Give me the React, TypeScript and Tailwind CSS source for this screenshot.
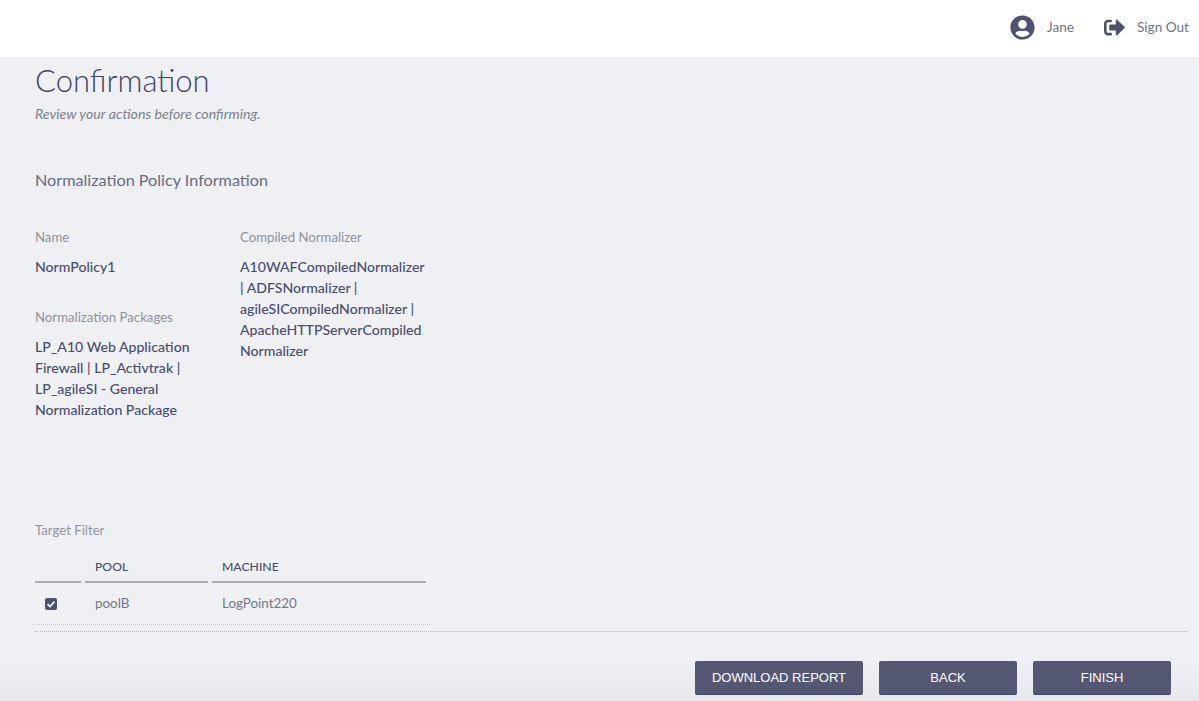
import { FaSignOutAlt, FaUserCircle } from "react-icons/fa";

function Label({ children }: { children: React.ReactNode }) {
  return <div className="text-[13.2px] leading-[20px] text-[#8f929e]">{children}</div>;
}

function Value({ children }: { children: React.ReactNode }) {
  return <div className="mt-[9px] text-[14.1px] font-medium leading-[21px] text-[#484d6e]">{children}</div>;
}

function ActionButton({ label, width }: { label: string; width: string }) {
  return (
    <button className={"h-[34px] rounded-[2px] border-b border-dotted border-[#2f3350] bg-[#535773] text-[13px] text-white font-['Liberation_Sans',sans-serif] " + width}>
      {label}
    </button>
  );
}

export default function App() {
  return (
    <div className="h-[701px] overflow-hidden bg-[linear-gradient(to_bottom,#eff0f4_94%,#e7e8eb_100%)] font-['Lato',sans-serif]">
      <header className="flex h-[57px] items-center justify-end bg-white pb-[3px] pr-[10px] text-[13.6px] text-[#6f7285]">
        <FaUserCircle className="text-[25px] text-[#4e5272]" />
        <span className="ml-[12px]">Jane</span>
        <FaSignOutAlt className="ml-[30px] text-[21px] text-[#4e5272]" />
        <span className="ml-[12px]">Sign Out</span>
      </header>

      <main className="pl-[35px] pr-[12px]">
        <h1 className="mt-[4px] text-[31px] font-light leading-[38px] text-[#3f4463]">Confirmation</h1>
        <p className="mt-[5px] text-[14.2px] italic leading-[20px] text-[#7d808c]">Review your actions before confirming.</p>
        <h2 className="mt-[44px] text-[16.2px] leading-[24px] text-[#686b80]">Normalization Policy Information</h2>

        <div className="mt-[35px] flex h-[293px] gap-[49px]">
          <div className="w-[156px]">
            <Label>Name</Label>
            <Value>NormPolicy1</Value>
            <div className="mt-[30px]">
              <Label>Normalization Packages</Label>
              <Value>LP_A10 Web Application Firewall | LP_Activtrak | LP_agileSI - General Normalization Package</Value>
            </div>
          </div>
          <div className="w-[190px]">
            <Label>Compiled Normalizer</Label>
            <Value>
              A10WAFCompiledNormalizer | ADFSNormalizer | agileSICompiledNormalizer | ApacheHTTPServerCompiled<wbr />Normalizer
            </Value>
          </div>
        </div>

        <Label>Target Filter</Label>
        <div className="mt-[11px] -ml-[2px] w-[397px]">
          <div className="flex gap-[4px] pl-[2px] text-[12.2px] font-medium leading-[32px] text-[#4a4e6a]">
            <div className="h-[32px] w-[46px] border-b-2 border-[#a9abb5]" />
            <div className="h-[32px] w-[123px] border-b-2 border-[#a9abb5] pl-[10px]">POOL</div>
            <div className="h-[32px] w-[214px] border-b-2 border-[#a9abb5] pl-[10px]">MACHINE</div>
          </div>
          <div className="flex h-[42px] items-center border-b border-dotted border-[#c4c6ce] text-[13.4px] text-[#73768a]">
            <span className="ml-[12px] mt-[1px] flex h-[12px] w-[12px] items-center justify-center rounded-[2px] bg-[#4e5272]">
              <svg viewBox="0 0 12 12" className="h-[12px] w-[12px]" fill="none" stroke="white" strokeWidth="1.6">
                <path d="M2.5 6.2 5 8.6 9.5 3.5" />
              </svg>
            </span>
            <span className="ml-[38px] w-[127px]">poolB</span>
            <span>LogPoint220</span>
          </div>
        </div>

        <div className="mt-[6px] border-t border-dotted border-[#b4b6bf]" />
        <div className="mt-[29px] flex justify-end gap-[16px] pr-[16px]">
          <ActionButton label="DOWNLOAD REPORT" width="w-[168px]" />
          <ActionButton label="BACK" width="w-[138px]" />
          <ActionButton label="FINISH" width="w-[138px]" />
        </div>
      </main>
    </div>
  );
}
